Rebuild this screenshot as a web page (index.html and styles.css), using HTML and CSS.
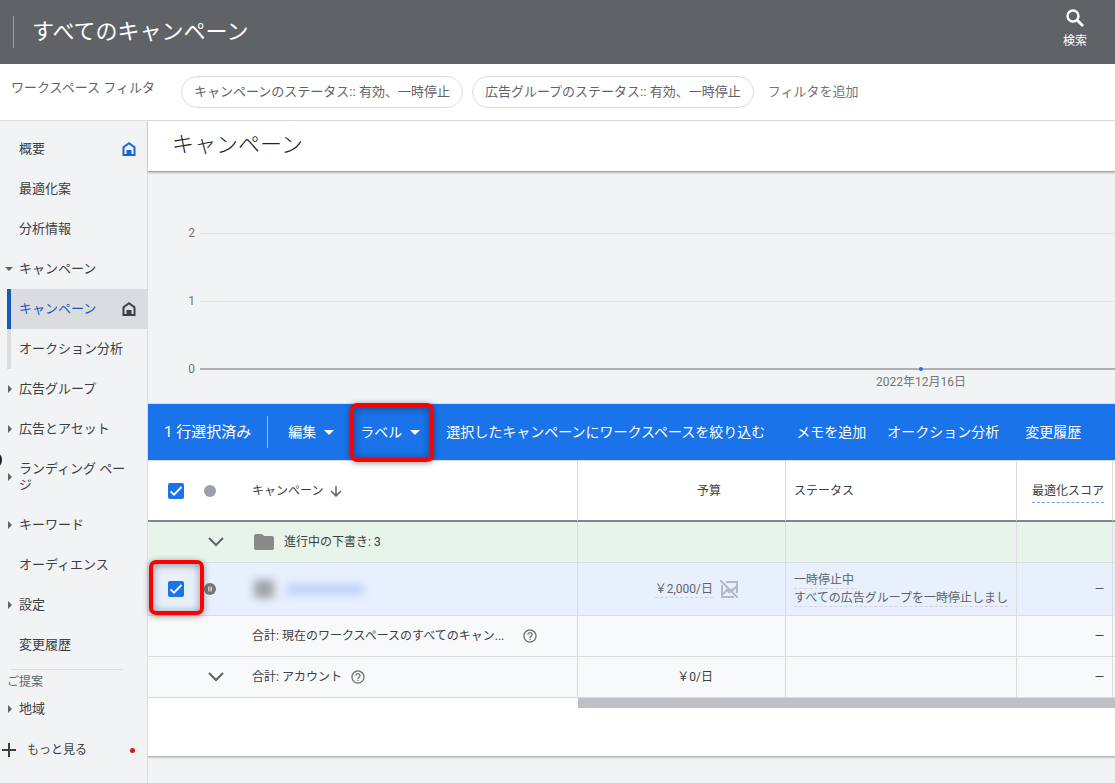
FILE: index.html
```html
<!DOCTYPE html>
<html lang="ja">
<head>
<meta charset="utf-8">
<title>すべてのキャンペーン</title>
<link rel="stylesheet" href="styles.css">
</head>
<body>
<svg class="defs" aria-hidden="true">
  <symbol id="home" viewBox="0 0 14 14"><path fill="none" stroke="currentColor" stroke-width="2" d="M1.500 13V5.200L7 1.300l5.500 3.900V13z"/><path fill="currentColor" d="M4.500 8h5v5h-5z"/></symbol>
  <symbol id="help" viewBox="0 0 24 24"><path fill="currentColor" d="M11 18h2v-2h-2v2zm1-16C6.480 2 2 6.480 2 12s4.480 10 10 10 10-4.480 10-10S17.520 2 12 2zm0 18c-4.410 0-8-3.590-8-8s3.590-8 8-8 8 3.590 8 8-3.590 8-8 8zm0-14c-2.210 0-4 1.790-4 4h2c0-1.100.9-2 2-2s2 .9 2 2c0 2-3 1.750-3 5h2c0-2.250 3-2.500 3-5 0-2.210-1.790-4-4-4z"/></symbol>
  <symbol id="chevron" viewBox="0 0 16 10"><path fill="none" stroke="currentColor" stroke-width="2" d="M1 1l7 7 7-7"/></symbol>
</svg>

<header class="topbar">
  <h1 class="topbar-title">すべてのキャンペーン</h1>
  <button class="search" type="button">
    <svg viewBox="0 0 18 18" width="18" height="18" aria-hidden="true"><circle cx="7" cy="7" r="5.500" fill="none" stroke="currentColor" stroke-width="2.400"/><path d="M11 11l6 6" stroke="currentColor" stroke-width="2.800"/></svg>
    <span>検索</span>
  </button>
</header>

<section class="filters">
  <span class="filters-label">ワークスペース フィルタ</span>
  <button class="chip" type="button">キャンペーンのステータス:: 有効、一時停止</button>
  <button class="chip" type="button">広告グループのステータス:: 有効、一時停止</button>
  <button class="add-filter" type="button">フィルタを追加</button>
</section>

<div class="body">
  <nav class="side">
    <a class="item" href="#">概要<svg class="home home-blue" aria-hidden="true"><use href="#home"/></svg></a>
    <a class="item" href="#">最適化案</a>
    <a class="item" href="#">分析情報</a>
    <a class="item open" href="#">キャンペーン</a>
    <a class="item sub current" href="#">キャンペーン<svg class="home" aria-hidden="true"><use href="#home"/></svg></a>
    <a class="item sub" href="#">オークション分析</a>
    <a class="item closed" href="#">広告グループ</a>
    <a class="item closed" href="#">広告とアセット</a>
    <a class="item closed tall" href="#">ランディング ページ</a>
    <a class="item closed" href="#">キーワード</a>
    <a class="item" href="#">オーディエンス</a>
    <a class="item closed" href="#">設定</a>
    <a class="item" href="#">変更履歴</a>
    <hr class="side-rule">
    <span class="side-caption">ご提案</span>
    <a class="item closed short" href="#">地域</a>
    <button class="more" type="button">
      <svg viewBox="0 0 14 14" width="14" height="14" aria-hidden="true"><path d="M7 0v14M0 7h14" stroke="currentColor" stroke-width="2"/></svg>
      <span>もっと見る</span><i class="alert"></i>
    </button>
    <span class="handle"></span>
  </nav>

  <main class="main">
    <h2 class="page-title">キャンペーン</h2>

    <section class="chart">
      <div class="tick"><span class="tick-label">2</span><span class="line"></span></div>
      <div class="tick"><span class="tick-label">1</span><span class="line"></span></div>
      <div class="tick"><span class="tick-label">0</span><span class="line axis"><span class="point"><span class="date">2022年12月16日</span></span></span></div>
    </section>

    <section class="card">
      <div class="toolbar">
        <span class="count">1 行選択済み</span>
        <div class="actions">
          <button class="action menu" type="button">編集</button>
          <button class="action menu" type="button">ラベル<span class="mark mark-label"></span></button>
          <button class="action" type="button">選択したキャンペーンにワークスペースを絞り込む</button>
          <button class="action apart" type="button">メモを追加</button>
          <button class="action near" type="button">オークション分析</button>
          <button class="action" type="button">変更履歴</button>
        </div>
      </div>

      <table class="grid">
        <colgroup><col class="c-check"><col class="c-state"><col class="c-name"><col class="c-budget"><col class="c-status"><col class="c-score"><col></colgroup>
        <thead>
          <tr>
            <th class="check"><input type="checkbox" checked aria-label="すべて選択"></th>
            <th><span class="dot"></span></th>
            <th class="name edge"><span class="row">キャンペーン<svg class="arrow" viewBox="0 0 12 12" width="12" height="12" aria-hidden="true"><path d="M6 1v10M1 6l5 5 5-5" fill="none" stroke="currentColor" stroke-width="1.500"/></svg></span></th>
            <th class="budget-head edge">予算</th>
            <th class="status edge">ステータス</th>
            <th class="score edge"><span class="score-label">最適化スコア</span></th>
            <th></th>
          </tr>
        </thead>
        <tbody>
          <tr class="drafts">
            <td></td>
            <td class="toggle"><svg class="chev" aria-hidden="true"><use href="#chevron"/></svg></td>
            <td class="name edge"><span class="row"><svg class="folder" viewBox="0 0 20 16" width="20" height="16" aria-hidden="true"><path fill="#8a8a8a" d="M2 0h6l2 2h8a2 2 0 0 1 2 2v10a2 2 0 0 1-2 2H2a2 2 0 0 1-2-2V2a2 2 0 0 1 2-2z"/></svg>進行中の下書き: 3</span></td>
            <td class="edge"></td><td class="edge"></td><td class="edge"></td><td></td>
          </tr>
          <tr class="selected">
            <td class="check"><input type="checkbox" checked aria-label="キャンペーンを選択"><span class="mark mark-check"></span></td>
            <td><svg class="pause" viewBox="0 0 12 12" width="12" height="12" aria-hidden="true"><circle cx="6" cy="6" r="6" fill="#757575"/><path d="M4.800 3.500v5M7.200 3.500v5" stroke="#c9ccd2" stroke-width="1.600"/></svg></td>
            <td class="name edge"><span class="row"><span class="blur-icon"></span><span class="blur-name"></span></span></td>
            <td class="budget-icon edge"><span class="row end"><span class="dashed">&#xFFE5;2,000/日</span><svg viewBox="0 0 18 18" width="18" height="18" aria-hidden="true"><g fill="none" stroke="#b4b9c6" stroke-width="2"><path d="M6 2h11v11M2 5v12h12M0 0l18 18M3 14l4-4 3 3M11 9l2 1 4-4"/></g></svg></span></td>
            <td class="status edge"><span class="lines"><span class="dashed">一時停止中</span><span class="dashed">すべての広告グループを一時停止しまし</span></span></td>
            <td class="score edge">—</td><td></td>
          </tr>
          <tr class="total">
            <td></td><td></td>
            <td class="name edge"><span class="row"><span class="long">合計: 現在のワークスペースのすべてのキャン...</span><svg class="help" aria-hidden="true"><use href="#help"/></svg></span></td>
            <td class="edge"></td><td class="edge"></td><td class="score edge">—</td><td></td>
          </tr>
          <tr class="total">
            <td></td>
            <td class="toggle"><svg class="chev" aria-hidden="true"><use href="#chevron"/></svg></td>
            <td class="name edge"><span class="row">合計: アカウント<svg class="help after" aria-hidden="true"><use href="#help"/></svg></span></td>
            <td class="budget edge">&#xFFE5;0/日</td><td class="edge"></td><td class="score edge">—</td><td></td>
          </tr>
        </tbody>
      </table>
      <div class="scrollbar"></div>
    </section>
  </main>
</div>
</body>
</html>
```
FILE: styles.css
```css
* { box-sizing: border-box; }
body {
  margin: 0;
  min-height: 100vh;
  display: flex;
  flex-direction: column;
  overflow-x: hidden;
  background: #f1f3f4;
  color: #3c4043;
  font: 13px/16px Roboto, "Noto Sans CJK JP", sans-serif;
}
button { font: inherit; color: inherit; background: none; border: 0; padding: 0; cursor: pointer; white-space: nowrap; }
a { color: inherit; text-decoration: none; }
h1, h2 { margin: 0; font-weight: 300; font-size: 22px; line-height: 32px; }
.defs { display: none; }

.topbar { display: flex; align-items: flex-start; justify-content: space-between; height: 64px; padding: 0 28px 0 13px; background: #5f6368; color: #fff; }
.topbar-title { margin-top: 16px; padding-left: 18px; border-left: 1px solid #9aa0a6; font-weight: 400; }
.search { display: flex; flex-direction: column; align-items: center; gap: 6px; padding-top: 9px; font-size: 12px; }

.filters { display: flex; align-items: center; height: 57px; padding-left: 11px; background: #fff; border-bottom: 1px solid #dadce0; color: #5f6368; }
.filters-label { margin: 0 26px 8px 0; white-space: nowrap; }
.chip { height: 32px; padding: 0 12px; margin-right: 9px; border: 1px solid #dadce0; border-radius: 16px; }
.add-filter { margin-left: 5px; color: #757575; }

.body { display: flex; flex: 1; }
.side { position: relative; flex: none; width: 148px; padding-top: 8px; border-right: 1px solid #dadce0; }
.item { position: relative; display: flex; align-items: center; justify-content: space-between; height: 40px; padding: 0 11px 0 19px; }
.tall { height: 56px; padding-right: 20px; }
.short { height: 30px; }
.sub { margin-left: 7px; padding-left: 8px; border-left: 4px solid #dadce0; }
.current { background: #dadce0; border-left-color: #185abc; color: #185abc; }
.home { width: 14px; height: 14px; color: #3c4043; }
.home-blue { color: #1967d2; }
.open::before, .closed::before { content: ""; position: absolute; top: 50%; border: 4px solid transparent; }
.open::before { left: 5px; margin-top: -2px; border-top-color: #5f6368; border-bottom: 0; }
.closed::before { left: 8px; margin-top: -4px; border-left-color: #5f6368; border-right: 0; }
.side-rule { margin: 4px 24px 0 11px; border: 0; border-top: 1px solid #dadce0; }
.side-caption { display: block; padding-left: 7px; font-size: 12px; line-height: 24px; color: #5f6368; }
.more { display: flex; align-items: center; width: 100%; height: 40px; margin-top: 6px; padding: 0 12px 0 2px; font-size: 12px; }
.more span { margin-left: 11px; }
.alert { width: 5px; height: 5px; margin-left: auto; border-radius: 50%; background: #c5221f; }
.handle { position: absolute; left: -16px; top: 330px; width: 18px; height: 18px; border-radius: 50%; background: #202124; }

.main { flex: 1; min-width: 0; }
.page-title { position: relative; height: 51px; padding: 8px 0 0 24px; background: #fff; border-bottom: 1px solid #a4a6a8; box-shadow: 0 1px 2px rgba(60, 64, 67, .3); color: #202124; }

.chart { padding-top: 27px; border-bottom: 1px solid #dadce0; color: #757575; font-size: 12px; }
.tick { display: flex; align-items: center; height: 68px; }
.tick-label { width: 52px; padding-right: 5px; text-align: right; }
.line { position: relative; flex: 1; height: 1px; background: #e0e2e4; }
.axis { height: 2px; background: #b0b0b0; }
.point { position: absolute; left: 78.8%; top: -1px; width: 4px; height: 4px; margin-left: -2px; border-radius: 50%; background: #1a73e8; }
.date { position: absolute; left: 50%; top: 7px; transform: translateX(-50%); white-space: nowrap; }

.card { padding-bottom: 48px; background: #fff; border-bottom: 1px solid #b4b8bc; box-shadow: 0 1px 1px rgba(60, 64, 67, .2); }
.toolbar { display: flex; align-items: center; height: 56px; padding-left: 16px; background: #1a73e8; color: #fff; font-size: 14px; }
.count { padding-right: 16px; border-right: 1px solid #8cb8f3; font-size: 15px; line-height: 32px; white-space: nowrap; }
.actions { display: flex; gap: 26px; padding-left: 20px; }
.action { position: relative; height: 56px; }
.apart { margin-left: 5px; }
.near { margin-left: -5px; }
.menu { display: flex; align-items: center; gap: 8px; }
.menu::after { content: ""; border: 5px solid transparent; border-top-color: #fff; border-bottom: 0; }
.mark { position: absolute; z-index: 2; border: 4px solid #f00; border-radius: 7px; box-shadow: 0 1px 6px rgba(0, 0, 0, .4), inset 0 1px 8px rgba(0, 0, 0, .4); pointer-events: none; }
.mark-label { inset: -1px -14px -2px -10px; }
.mark-check { inset: -3px 0 0 1px; }

.grid { width: 100%; table-layout: fixed; border-spacing: 0; border-top: 1px solid #dadce0; font-size: 12px; }
.c-check { width: 56px; }
.c-state { width: 34px; }
.c-name { width: 340px; }
.c-budget { width: 208px; }
.c-status { width: 231px; }
.c-score { width: 96px; }
th, td { height: 41px; padding: 0; border-bottom: 1px solid #dadce0; font-weight: 400; text-align: left; white-space: nowrap; }
th { height: 61px; border-bottom: 2px solid #80868b; }
.edge { border-right: 1px solid #dadce0; }
.drafts { background: #e6f4ea; }
.selected { background: #e8f0fe; color: #5f6368; }
.selected td { height: 53px; }
.total { background: #f8f9fa; }
.check { position: relative; text-align: center; }
.check input { appearance: none; display: block; width: 16px; height: 16px; margin: 0 auto; border-radius: 2px; background: #1a73e8 url("data:image/svg+xml,%3Csvg xmlns='http://www.w3.org/2000/svg' viewBox='0 0 16 16'%3E%3Cpath d='M2.500 8.300l3.500 3.400 7.500-7.700' fill='none' stroke='white' stroke-width='1.800'/%3E%3C/svg%3E"); }
.dot { display: block; width: 12px; height: 12px; border-radius: 50%; background: #9aa0a6; }
.pause { display: block; }
.toggle { padding-left: 4px; }
.chev { display: block; width: 16px; height: 10px; color: #5f6368; }
td.name, th.name { padding-left: 14px; }
.row { display: flex; align-items: center; }
.arrow { margin-left: 7px; color: #5f6368; }
.folder { margin: 0 10px 0 2px; }
.blur-icon { width: 20px; height: 18px; margin: 0 12px 0 2px; background: #9fa3a9; filter: blur(4px); }
.blur-name { width: 78px; height: 9px; background: #b4ccfa; filter: blur(5px); }
.long { min-width: 256px; }
.help { width: 16px; height: 16px; margin-left: 14px; color: #757575; }
.after { margin-left: 8px; }
td.budget, th.budget-head { padding-right: 72px; text-align: right; }
th.budget-head { padding-right: 64px; }
td.budget-icon { padding-right: 47px; }
.end { justify-content: flex-end; gap: 7px; }
.dashed { padding-top: 1px; border-bottom: 1px dashed #d0d3d8; line-height: 16px; }
td.status, th.status { padding: 0 8px; }
.lines { display: flex; flex-direction: column; align-items: flex-start; }
td.score, th.score { padding-right: 8px; text-align: right; }
.score-label { display: inline-block; padding-bottom: 3px; margin-top: 5px; border-bottom: 1px dashed #669df6; }
.scrollbar { height: 10px; margin-left: 430px; background: #bdc1c6; }
```
